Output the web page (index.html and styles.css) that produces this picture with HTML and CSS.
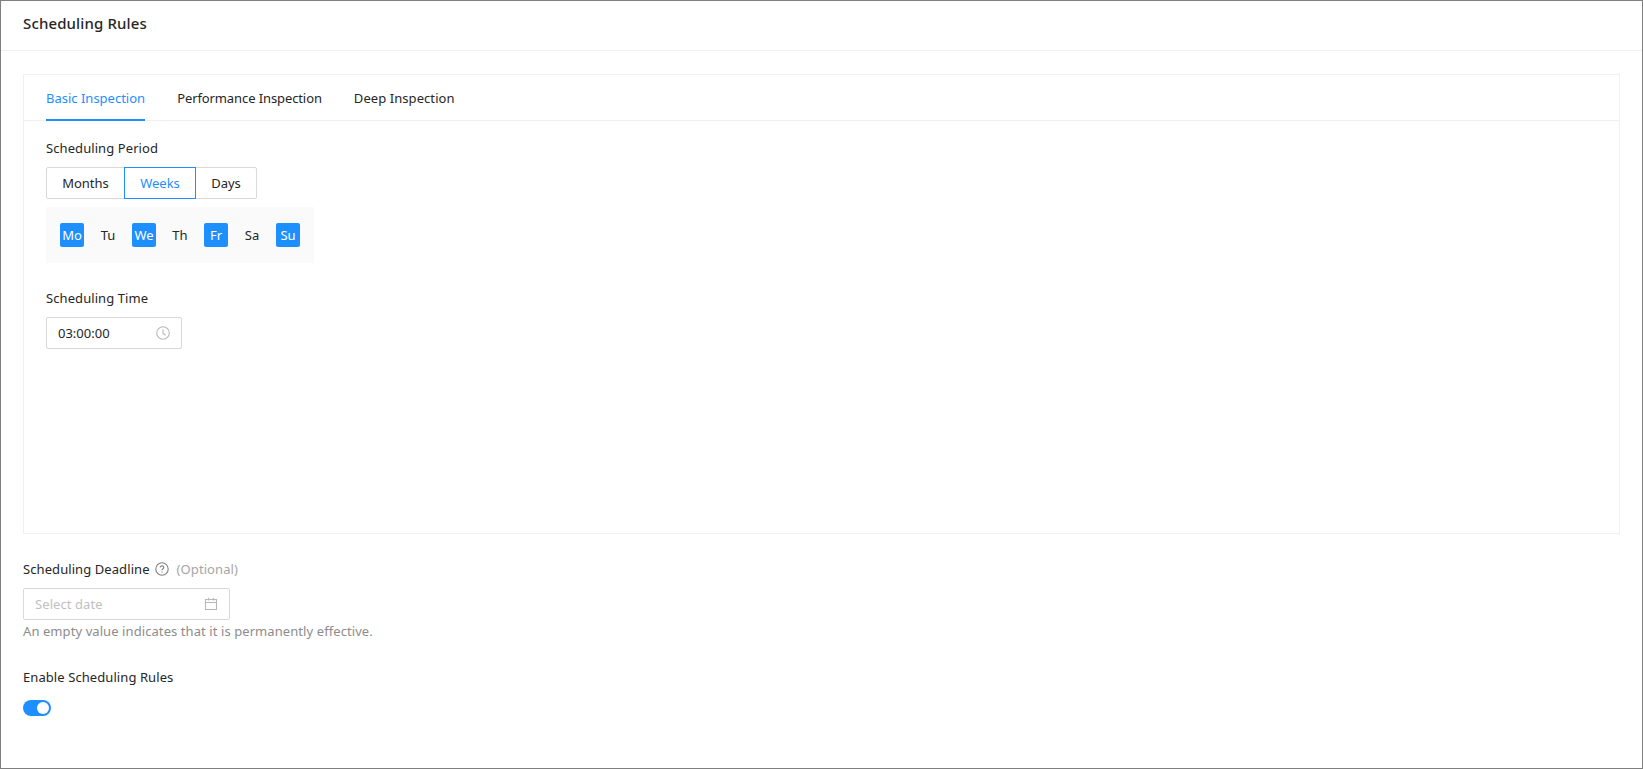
FILE: index.html
```html
<!DOCTYPE html>
<html lang="en">
<head>
<meta charset="utf-8">
<title>Scheduling Rules</title>
<link rel="stylesheet" href="styles.css">
</head>
<body>
<div class="window">
  <header class="page-header">Scheduling Rules</header>
  <main class="content">
    <section class="card">
      <nav class="tabs">
        <span class="tab active">Basic Inspection</span>
        <span class="tab tab-tight">Performance Inspection</span>
        <span class="tab tab-loose">Deep Inspection</span>
      </nav>
      <div class="card-body">
        <div class="label">Scheduling Period</div>
        <div class="segmented">
          <span class="seg seg-months">Months</span>
          <span class="seg seg-weeks selected">Weeks</span>
          <span class="seg seg-days">Days</span>
        </div>
        <div class="days">
          <span class="day on">Mo</span>
          <span class="day">Tu</span>
          <span class="day on">We</span>
          <span class="day">Th</span>
          <span class="day on">Fr</span>
          <span class="day">Sa</span>
          <span class="day on">Su</span>
        </div>
        <div class="label time-label">Scheduling Time</div>
        <div class="input time-input">
          <span>03:00:00</span>
          <svg class="icon" viewBox="0 0 14 14" width="14" height="14" fill="none" stroke="#b8b8b8" stroke-width="1.1"><circle cx="7" cy="7" r="6.3"/><path d="M7 3.4V7.4L9.6 9.2"/></svg>
        </div>
      </div>
    </section>
    <div class="label deadline-label">
      <span>Scheduling Deadline</span>
      <svg class="help" viewBox="0 0 14 14" width="14" height="14" fill="none" stroke="#808080" stroke-width="1.1"><circle cx="7" cy="7" r="6.2"/><path d="M5.2 5.6C5.2 4.5 6 3.9 7 3.9S8.8 4.6 8.8 5.5C8.8 6.7 7 6.8 7 8.3"/><path d="M7 9.5V10.5"/></svg>
      <span class="optional">(Optional)</span>
    </div>
    <div class="input date-input">
      <span class="placeholder">Select date</span>
      <svg class="icon" viewBox="0 0 14 14" width="14" height="14" fill="none" stroke="#b8b8b8" stroke-width="1.1"><rect x="1.5" y="2.5" width="11" height="10"/><path d="M1.5 5.5H12.5M4.5 0.8V3.5M9.5 0.8V3.5"/></svg>
    </div>
    <div class="hint">An empty value indicates that it is permanently effective.</div>
    <div class="label enable-label">Enable Scheduling Rules</div>
    <div class="switch"><span class="knob"></span></div>
  </main>
</div>
</body>
</html>
```
FILE: styles.css
```css
* { box-sizing: border-box; }
html, body { margin: 0; padding: 0; background: #fff; }
body {
  font-family: "Noto Sans", "Open Sans", sans-serif;
  font-size: 13px;
  line-height: 20px;
  color: #262626;
}
.window {
  width: 1643px;
  height: 769px;
  border: 1px solid #7f7f7f;
  overflow: hidden;
}
.page-header {
  height: 50px;
  padding: 11px 22px 0;
  font-size: 15px;
  line-height: 22px;
  font-weight: 500;
  letter-spacing: 0.13px;
  border-bottom: 1px solid #f0f0f0;
}
.content { padding: 23px 22px 0; }
.card {
  height: 460px;
  width: 1597px;
  border: 1px solid #f0f0f0;
}
.tabs {
  display: flex;
  gap: 32px;
  height: 46px;
  padding: 0 22px;
  border-bottom: 1px solid #f0f0f0;
}
.tab {
  height: 46px;
  padding-top: 13px;
}
.tab-tight { letter-spacing: -0.1px; }
.tab-loose { letter-spacing: 0.07px; }
.tab.active {
  color: #1e8fff;
  border-bottom: 2px solid #1e8fff;
}
.card-body { padding: 17px 22px 0; }
.label { letter-spacing: 0.08px; }
.segmented { display: flex; margin-top: 9px; height: 32px; }
.seg {
  display: flex;
  align-items: center;
  justify-content: center;
  border: 1px solid #d9d9d9;
  margin-left: -1px;
}
.seg:first-child { margin-left: 0; border-radius: 2px 0 0 2px; }
.seg:last-child { border-radius: 0 2px 2px 0; }
.seg-months { width: 79px; }
.seg-weeks { width: 72px; }
.seg-days { width: 62px; }
.seg.selected { color: #1e8fff; border-color: #1e8fff; position: relative; z-index: 1; }
.days {
  display: flex;
  gap: 12px;
  width: 268px;
  height: 56px;
  margin-top: 8px;
  padding: 16px 14px;
  background: #fafafa;
}
.day {
  width: 24px;
  height: 24px;
  display: flex;
  align-items: center;
  justify-content: center;
  border-radius: 2px;
}
.day.on { background: #1e8fff; color: #fff; }
.time-label { margin-top: 25px; }
.input {
  display: flex;
  align-items: center;
  justify-content: space-between;
  height: 32px;
  padding: 0 11px;
  border: 1px solid #d9d9d9;
  border-radius: 2px;
}
.time-input { width: 136px; margin-top: 9px; }
.icon { flex: none; }
.deadline-label {
  display: flex;
  align-items: center;
  margin-top: 25px;
}
.help { margin-left: 5px; }
.optional { margin-left: 8px; color: #a6a6a6; }
.date-input { width: 207px; margin-top: 9px; }
.placeholder { color: #bfbfbf; letter-spacing: 0.08px; }
.hint { color: #8c8c8c; margin-top: 1px; letter-spacing: 0.08px; }
.enable-label { margin-top: 26px; }
.switch {
  position: relative;
  width: 28px;
  height: 16px;
  margin-top: 13px;
  border-radius: 8px;
  background: #1e8fff;
}
.knob {
  position: absolute;
  top: 2px;
  right: 2px;
  width: 12px;
  height: 12px;
  border-radius: 50%;
  background: #fff;
}
```
